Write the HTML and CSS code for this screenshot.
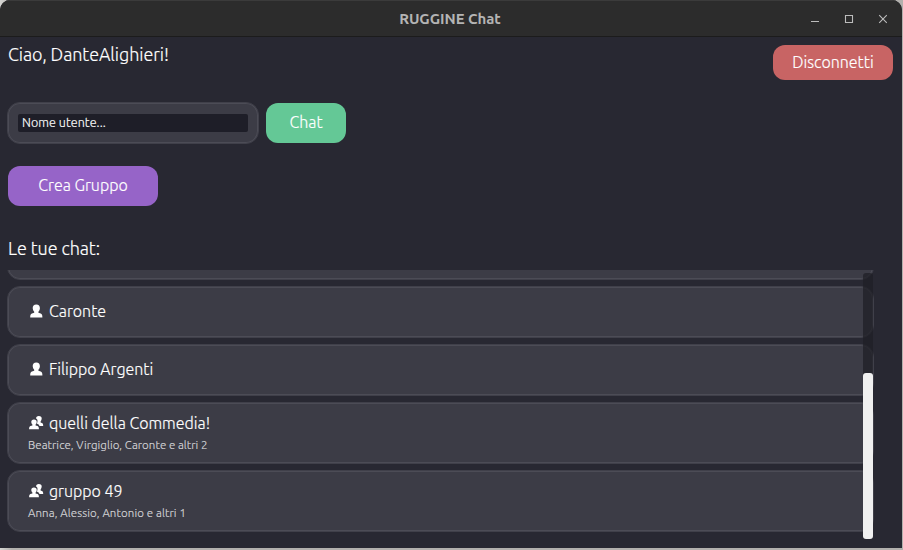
FILE: index.html
```
<!DOCTYPE html>
<html lang="it">
<head>
<meta charset="utf-8">
<title>RUGGINE Chat</title>
<link rel="stylesheet" href="styles.css">
</head>
<body>
<svg class="defs" aria-hidden="true">
  <symbol id="user" viewBox="0 0 16 16"><path d="M8.300 1.500C5.900 1.500 4.600 3 4.700 5.200c.1 1.500.6 2.700 1.500 3.600v1L3.900 10.500c-1.200.4-1.700 1.500-1.700 3.900h12.200c0-2.400-.5-3.500-1.700-3.900L10.400 9.800v-1c.9-.9 1.400-2.100 1.500-3.600.1-2.200-1.200-3.700-3.600-3.700z"/></symbol>
  <symbol id="group" viewBox="0 0 16 16"><path d="M10.800 1C9 1 8 2.100 8.100 3.600c1 .5 1.500 1.500 1.400 2.700 0 .9-.3 1.600-.7 2.200 1.500.5 2.300 1.100 2.600 2.500H15.200c0-1.900-.4-2.600-1.300-3L12.600 7.400v-1c.7-.7 1.100-1.700 1.100-2.800C13.800 2.100 12.800 1 10.800 1z"/><path d="M5.900 4.500C4.200 4.500 3.200 5.500 3.300 7c0 1 .5 1.900 1.100 2.500v.9l-2 .7c-.9.400-1.300 1.300-1.300 3.100h9.800c0-1.800-.4-2.700-1.300-3.100l-2-.7v-.9c.6-.6 1.100-1.500 1.100-2.500.1-1.500-.9-2.500-2.800-2.500z"/></symbol>
</svg>
<div class="window">
  <header class="titlebar">
    <h1 class="title">RUGGINE Chat</h1>
    <div class="controls">
      <svg viewBox="0 0 10 10"><path d="M1 7.500h8"/></svg>
      <svg viewBox="0 0 10 10"><path d="M1.500 1.500h7v7h-7z"/></svg>
      <svg viewBox="0 0 10 10"><path d="M1.200 1.200l7.600 7.600M8.800 1.200l-7.600 7.600"/></svg>
    </div>
  </header>
  <main class="content">
    <div class="top">
      <p class="greeting">Ciao, DanteAlighieri!</p>
      <button class="btn red"><span>Disconnetti</span></button>
    </div>
    <div class="search">
      <div class="field"><div class="input">Nome utente...</div></div>
      <button class="btn green"><span>Chat</span></button>
    </div>
    <button class="btn purple"><span>Crea Gruppo</span></button>
    <h2 class="heading">Le tue chat:</h2>
    <section class="list">
      <div class="card"></div>
      <div class="card"><div class="row"><svg><use href="#user"/></svg><span class="name">Caronte</span></div></div>
      <div class="card"><div class="row"><svg><use href="#user"/></svg><span class="name">Filippo Argenti</span></div></div>
      <div class="card group"><div class="row"><svg><use href="#group"/></svg><span class="name">quelli della Commedia!</span></div><div class="members">Beatrice, Virgiglio, Caronte e altri 2</div></div>
      <div class="card group"><div class="row"><svg><use href="#group"/></svg><span class="name">gruppo 49</span></div><div class="members last">Anna, Alessio, Antonio e altri 1</div></div>
      <div class="track"><div class="thumb"></div></div>
    </section>
  </main>
</div>
</body>
</html>
```
FILE: styles.css
```
* { box-sizing: border-box; margin: 0; }
body {
  width: 903px; height: 550px; overflow: hidden;
  background: linear-gradient(90deg, #d5d5d2, #b2b0ad 12px);
  font-family: Ubuntu, "Noto Sans", "Open Sans", sans-serif;
  font-weight: 300; color: #fff; white-space: nowrap;
}
.defs { position: absolute; width: 0; height: 0; }
.window { width: 902px; height: 548px; background: #282832; border-radius: 10px 10px 0 0; overflow: hidden; }
.titlebar {
  height: 37px; background: #2c2c2c; border-top: 1px solid #3b3b3b; border-bottom: 1px solid #1c1c1c;
  display: grid; grid-template-columns: 1fr auto 1fr; align-items: center;
}
.title { grid-column: 2; font-size: 15px; line-height: 20px; font-weight: 700; color: #b4b4b4; letter-spacing: -.05px; position: relative; left: -1px; }
.controls { justify-self: end; display: flex; gap: 24px; padding-right: 14px; }
.controls svg { width: 10px; height: 10px; fill: none; stroke: #bcbcbc; stroke-width: 1.1; }
.content { padding: 8px 9px 0 8px; -webkit-text-stroke: .15px currentColor; }
.top { display: flex; justify-content: space-between; height: 57px; }
.greeting { margin-top: -1px; font-size: 18px; line-height: 20px; letter-spacing: -.08px; }
.btn {
  display: flex; align-items: center; justify-content: center; border: 0; padding: 0 0 2px;
  height: 40px; border-radius: 12px; font: inherit; font-size: 16px; line-height: 20px; color: #fff;
}
.red { width: 120px; height: 35px; padding-bottom: 1px; background: #c86464; }
.green { width: 80px; background: #64c896; }
.purple { width: 150px; background: #9664c8; margin-top: 22px; }
.search { display: flex; align-items: center; gap: 7px; height: 42px; margin-left: -1px; }
.field { width: 252px; height: 42px; padding: 11px 10px; border: 1px solid #40404a; box-shadow: inset 0 0 0 1px #4c4c56; border-radius: 13px; background: #3c3c46; }
.input { height: 18px; border-radius: 2px; background: #1e1e28; padding-left: 4px; font-size: 12.5px; line-height: 17px; letter-spacing: .06px; }
.heading { margin-top: 31px; height: 33px; font-size: 18px; line-height: 22px; font-weight: 300; letter-spacing: -.08px; }
.list {
  position: relative; width: 867px; height: 270px; margin-left: -1px; overflow: hidden;
  display: flex; flex-direction: column; justify-content: flex-end; gap: 6px; padding-bottom: 8px;
}
.card { flex: none; height: 52px; border: 1px solid #40404a; box-shadow: inset 0 0 0 1px #4c4c56; border-radius: 13px; background: #3c3c46; padding: 14px 20px 0; }
.group { height: 62px; padding-top: 10px; }
.row { display: flex; align-items: center; gap: 5px; height: 20px; }
.row svg { width: 16px; height: 16px; fill: #fff; }
.name { font-size: 16px; line-height: 20px; }
.members { font-size: 11.5px; line-height: 14px; margin-top: 5px; color: #d6d6d9; letter-spacing: .06px; }
.last { letter-spacing: .12px; }
.track { position: absolute; right: 1px; top: 3px; bottom: 1px; width: 10px; border-radius: 3px; background: rgba(30, 30, 38, .72); display: flex; align-items: flex-end; }
.thumb { width: 10px; height: 166px; border-radius: 3px; background: #f0f0f0; }
```
